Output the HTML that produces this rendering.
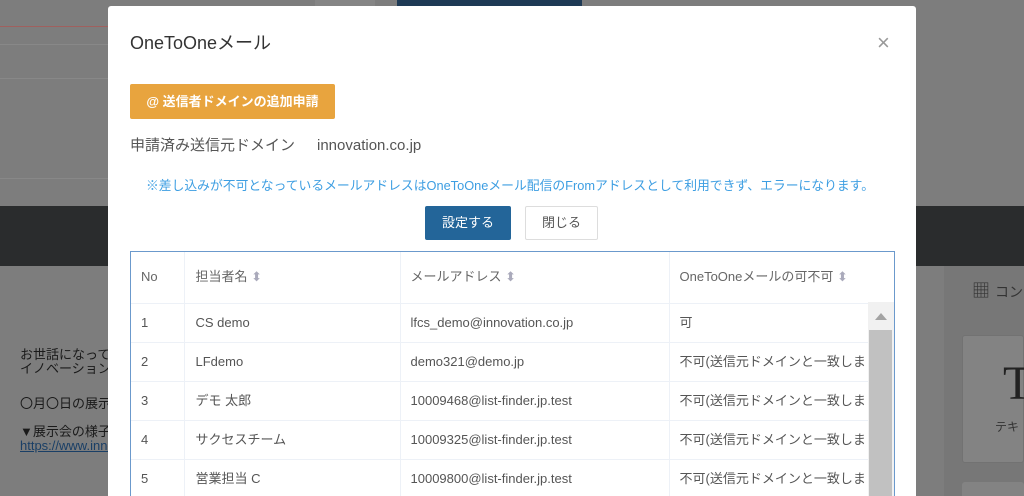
<!DOCTYPE html>
<html><head><meta charset="utf-8"><style>
*{margin:0;padding:0;box-sizing:border-box}
html,body{width:1024px;height:496px;overflow:hidden}
body{position:relative;background:#7d7d7d;font-family:"Liberation Sans","Noto Sans CJK JP",sans-serif}
.abs{position:absolute}
.modal{left:108px;top:6px;width:808px;height:490px;background:#fff;border-radius:3px 3px 0 0}
.t{color:#555;font-size:13px}
table{border-collapse:collapse}
td{line-height:16px;white-space:nowrap}
</style></head><body>
<div class="abs" style="left:0;top:26px;width:108px;height:1px;background:#a0605e"></div>
<div class="abs" style="left:0;top:44px;width:108px;height:1px;background:#888"></div>
<div class="abs" style="left:0;top:78px;width:108px;height:1px;background:#888"></div>
<div class="abs" style="left:0;top:178px;width:108px;height:1px;background:#888"></div>
<div class="abs" style="left:315px;top:0;width:60px;height:6px;background:#858585"></div>
<div class="abs" style="left:397px;top:0;width:185px;height:6px;background:#1e3a55"></div>
<div class="abs" style="left:0;top:206px;width:1024px;height:60px;background:#2a2c2d"></div>
<div class="abs" style="left:944px;top:266px;width:80px;height:230px;background:#777"></div>
<div class="abs" style="left:972px;top:280px;font-size:18px;color:#333;line-height:22px">▦ <span style="font-size:14px">コン</span></div>
<div class="abs" style="left:962px;top:335px;width:62px;height:128px;background:#838383;border:1px solid #727272;border-radius:3px"></div>
<div class="abs" style="left:1003px;top:356px;font-family:'Liberation Serif',serif;font-size:48px;color:#222;line-height:56px">T</div>
<div class="abs" style="left:995px;top:418px;font-size:12px;color:#333">テキ</div>
<div class="abs" style="left:962px;top:482px;width:62px;height:14px;background:#838383;border-radius:3px 3px 0 0"></div>
<div class="abs" style="left:20px;top:348px;font-size:13px;color:#1a1a1a;line-height:14px">お世話になって<br>イノベーション</div>
<div class="abs" style="left:20px;top:393px;font-size:13px;color:#1a1a1a">〇月〇日の展示</div>
<div class="abs" style="left:20px;top:425px;font-size:13px;color:#1a1a1a;line-height:14px">▼展示会の様子<br><span style="color:#1a3f66;text-decoration:underline">https://www.inno</span></div>

<div class="abs modal"></div>
<div class="abs" style="left:130px;top:31px;font-size:18px;color:#333;line-height:24px">OneToOneメール</div>
<div class="abs" style="left:877px;top:31px;font-size:22px;color:#999;line-height:24px">×</div>
<div class="abs" style="left:130px;top:84px;width:205px;height:35px;background:#e8a43e;border-radius:2px;color:#fff;font-weight:bold;font-size:13px;line-height:35px;text-align:center">@ 送信者ドメインの追加申請</div>
<div class="abs" style="left:130px;top:136px;font-size:15px;color:#555;line-height:20px;white-space:nowrap">申請済み送信元ドメイン<span style="position:absolute;left:187px;top:0">innovation.co.jp</span></div>
<div class="abs" style="left:120px;top:178px;width:780px;text-align:center;font-size:12.8px;color:#3d9ee2;line-height:16px;white-space:nowrap">※差し込みが不可となっているメールアドレスはOneToOneメール配信のFromアドレスとして利用できず、エラーになります。</div>
<div class="abs" style="left:425px;top:206px;width:86px;height:34px;background:#236599;border-radius:2px;color:#fff;font-size:13px;line-height:34px;text-align:center">設定する</div>
<div class="abs" style="left:525px;top:206px;width:73px;height:34px;border:1px solid #ddd;border-radius:2px;color:#555;font-size:13px;line-height:32px;text-align:center">閉じる</div>

<div class="abs" style="left:130px;top:251px;width:765px;height:245px;border:1px solid #6b99cc;border-bottom:0;overflow:hidden">
<table class="t">
<tr style="height:51px;color:#666">
<td style="width:53px;padding-left:10px;border-right:1px solid #edf1f7;border-bottom:1px solid #edf1f7">No</td>
<td style="width:216px;padding-left:11px;border-right:1px solid #edf1f7;border-bottom:1px solid #edf1f7">担当者名 <span style="color:#aab">⬍</span></td>
<td style="width:269px;padding-left:10px;border-right:1px solid #edf1f7;border-bottom:1px solid #edf1f7">メールアドレス <span style="color:#aab">⬍</span></td>
<td style="width:225px;padding-left:10px;border-bottom:1px solid #edf1f7">OneToOneメールの可不可 <span style="color:#aab">⬍</span></td></tr>
<tr style="height:39px"><td style="padding-left:10px;border:1px solid #edf1f7;border-left:0">1</td><td style="padding-left:11px;border:1px solid #edf1f7">CS demo</td><td style="padding-left:10px;border:1px solid #edf1f7">lfcs_demo@innovation.co.jp</td><td style="padding-left:10px;border-bottom:1px solid #edf1f7">可</td></tr>
<tr style="height:39px"><td style="padding-left:10px;border:1px solid #edf1f7;border-left:0">2</td><td style="padding-left:11px;border:1px solid #edf1f7">LFdemo</td><td style="padding-left:10px;border:1px solid #edf1f7">demo321@demo.jp</td><td style="padding-left:10px;border-bottom:1px solid #edf1f7">不可(送信元ドメインと一致しま</td></tr>
<tr style="height:39px"><td style="padding-left:10px;border:1px solid #edf1f7;border-left:0">3</td><td style="padding-left:11px;border:1px solid #edf1f7">デモ 太郎</td><td style="padding-left:10px;border:1px solid #edf1f7">10009468@list-finder.jp.test</td><td style="padding-left:10px;border-bottom:1px solid #edf1f7">不可(送信元ドメインと一致しま</td></tr>
<tr style="height:39px"><td style="padding-left:10px;border:1px solid #edf1f7;border-left:0">4</td><td style="padding-left:11px;border:1px solid #edf1f7">サクセスチーム</td><td style="padding-left:10px;border:1px solid #edf1f7">10009325@list-finder.jp.test</td><td style="padding-left:10px;border-bottom:1px solid #edf1f7">不可(送信元ドメインと一致しま</td></tr>
<tr style="height:39px"><td style="padding-left:10px;border:1px solid #edf1f7;border-left:0">5</td><td style="padding-left:11px;border:1px solid #edf1f7">営業担当 C</td><td style="padding-left:10px;border:1px solid #edf1f7">10009800@list-finder.jp.test</td><td style="padding-left:10px;border-bottom:1px solid #edf1f7">不可(送信元ドメインと一致しま</td></tr>
</table>
</div>
<div class="abs" style="left:868px;top:302px;width:26px;height:194px;background:#f1f1f1"></div>
<div class="abs" style="left:869px;top:330px;width:23px;height:166px;background:#c1c1c1"></div>
<div class="abs" style="left:875px;top:313px;width:0;height:0;border-left:6px solid transparent;border-right:6px solid transparent;border-bottom:7px solid #a3a3a3"></div>
</body></html>
